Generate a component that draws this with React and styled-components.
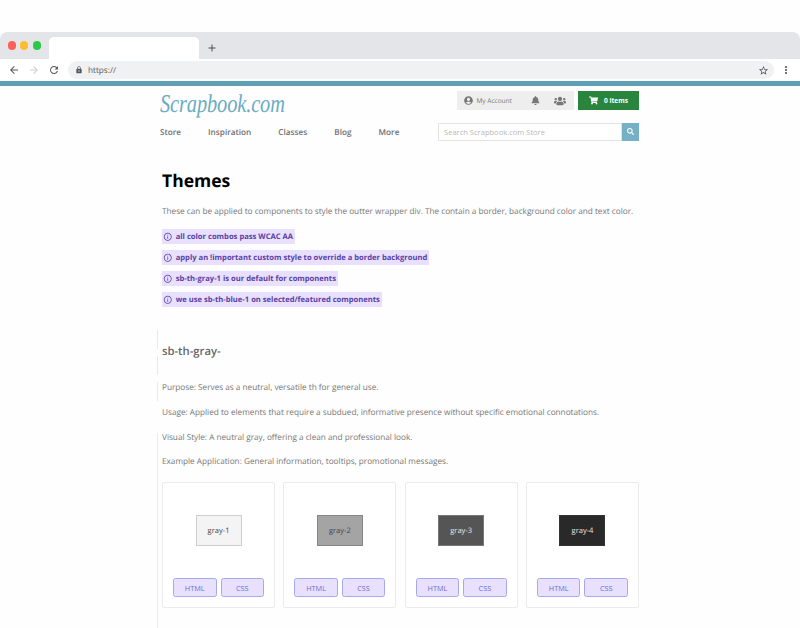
import React from 'react';
import styled, { createGlobalStyle } from 'styled-components';
import { FaBell, FaUsers, FaShoppingCart, FaSearch, FaUserCircle } from 'react-icons/fa';
import { MdArrowBack, MdArrowForward, MdRefresh, MdStarBorder, MdMoreVert, MdLock, MdAdd, MdInfoOutline } from 'react-icons/md';

const Global = createGlobalStyle`
  * { box-sizing: border-box; }
  body { margin: 0; background: #fefefe; font-family: "Open Sans", sans-serif; text-rendering: geometricPrecision; }
  h1, h2, p, ul { margin: 0; padding: 0; }
  button, input { font-family: inherit; margin: 0; }
  svg { display: block; flex: none; }
`;

const Page = styled.div`
  height: 628px;
  padding-top: 32px;
  overflow: hidden;
`;
const TabBar = styled.div`
  display: flex;
  height: 27px;
  padding: 5px 0 0 7px;
  background: #e4e5e9;
  border-radius: 7px 7px 0 0;
`;
const Lights = styled.div`
  display: flex;
  gap: 4.2px;
  width: 42px;
  padding: 4.4px 0 0 0.9px;
`;
const Light = styled.span`
  width: 8.2px;
  height: 8.2px;
  border-radius: 50%;
  background: ${(p) => p.$color};
`;
const Tab = styled.div`
  width: 150px;
  height: 22px;
  background: #fff;
  border-radius: 5px 5px 0 0;
`;
const NewTab = styled.div`
  padding: 5px 0 0 7px;
  color: #4b4d50;
`;
const Toolbar = styled.div`
  display: flex;
  align-items: center;
  height: 22px;
  padding: 0 8px;
  background: #fff;
  color: #55585c;
`;
const NavIcons = styled.div`
  display: flex;
  gap: 8px;
  width: 60px;
`;
const Faded = styled.span`
  color: #cfd0d2;
`;
const Address = styled.div`
  display: flex;
  align-items: center;
  width: 706px;
  height: 18px;
  padding: 0 5px 0 7px;
  border-radius: 9px;
  background: #f0f1f3;
  font-size: 8.2px;
`;
const Url = styled.span`
  flex: 1;
  padding-left: 5px;
`;
const MenuDots = styled.div`
  margin-left: 6px;
`;
const AccentBar = styled.div`
  height: 5px;
  background: #5f9fb4;
`;

const Site = styled.main`
  width: 479px;
  margin-left: 160px;
`;
const Header = styled.header`
  display: flex;
  justify-content: space-between;
  height: 59px;
`;
const Logo = styled.div`
  width: 157px;
  height: 40px;
  padding-top: 2px;
  color: #6aabc0;
  font: italic 25.5px/31px "Liberation Serif", serif;
  letter-spacing: -0.15px;
  transform: scaleX(0.8);
  transform-origin: left;
`;
const Nav = styled.nav`
  display: flex;
  gap: 27.1px;
  color: #707070;
  font-size: 8.2px;
  font-weight: 600;
  line-height: 14px;
`;
const Tools = styled.div`
  width: 201px;
  padding-top: 5px;
`;
const Actions = styled.div`
  display: flex;
  justify-content: flex-end;
  gap: 4px;
  height: 19px;
`;
const Account = styled.div`
  display: flex;
  align-items: center;
  width: 117px;
  padding-left: 7px;
  background: #eeeeee;
  color: #777;
  font-size: 6.5px;
`;
const AccountLabel = styled.span`
  width: 57.5px;
  padding-left: 3.5px;
`;
const BellSlot = styled.span`
  width: 23px;
`;
const Cart = styled.button`
  display: flex;
  align-items: center;
  gap: 6px;
  width: 61px;
  padding: 0 0 1px 11px;
  border: 0;
  background: #29853e;
  color: #fff;
  font-size: 6.6px;
  font-weight: 700;
`;
const Search = styled.div`
  display: flex;
  height: 18px;
  margin-top: 13px;
`;
const SearchInput = styled.input`
  flex: 1;
  min-width: 0;
  padding: 0 5px;
  border: 1px solid #e2e2e2;
  background: #fff;
  font-size: 7.55px;
  &::placeholder { color: #b9b9b9; }
`;
const SearchButton = styled.button`
  width: 17px;
  padding: 0 0 1px 5px;
  border: 0;
  background: #76b0c5;
  color: #fff;
`;

const Title = styled.h1`
  padding: 24px 0 0 2px;
  color: #000;
  font-size: 17.5px;
  line-height: 25px;
`;
const Text = styled.p`
  color: #777;
  font-size: 8.21px;
  line-height: 12px;
  white-space: nowrap;
`;
const Intro = styled(Text)`
  padding: 12px 0 0 2px;
`;
const Notes = styled.ul`
  display: flex;
  flex-direction: column;
  align-items: flex-start;
  gap: 6px;
  padding: 11.4px 0 0 2px;
  list-style: none;
`;
const Note = styled.li`
  display: flex;
  align-items: center;
  gap: 3.2px;
  height: 15px;
  padding: 0 2px 0 1px;
  background: #e8e0fd;
  color: #5940a5;
  font-size: 7.62px;
  font-weight: 700;
`;
const Rail = styled.span`
  display: block;
  width: 1px;
  height: ${(p) => p.$height}px;
  background: ${(p) => p.$color};
`;
const Section = styled.section`
  display: flex;
  width: 482px;
  height: 298px;
  margin: 22.6px 0 0 -3px;
`;
const Rails = styled.div`
  display: flex;
  flex-direction: column;
  gap: 7px;
  width: 5px;
`;
const Body = styled.div`
  width: 477px;
`;
const Heading = styled.h2`
  height: 52px;
  padding-top: 13px;
  color: #666;
  font-size: 11.25px;
  font-weight: 600;
  line-height: 17px;
`;
const Facts = styled.div`
  display: flex;
  flex-direction: column;
  gap: 12.8px;
`;
const Cards = styled.div`
  display: grid;
  grid-template-columns: repeat(4, 113px);
  justify-content: space-between;
  margin-top: 13.7px;
`;
const Card = styled.article`
  display: flex;
  flex-direction: column;
  align-items: center;
  justify-content: space-between;
  height: 126px;
  padding: 32px 0 10px;
  border: 1px solid #ebebeb;
  border-radius: 2px;
  background: #fff;
`;
const Swatch = styled.div`
  display: flex;
  align-items: center;
  justify-content: center;
  width: 46px;
  height: 31px;
  border: 1px solid ${(p) => p.$border};
  background: ${(p) => p.$fill};
  color: ${(p) => p.$ink};
  font-size: 7.55px;
`;
const Buttons = styled.div`
  display: flex;
  gap: 4px;
`;
const CodeButton = styled.button`
  width: 43.5px;
  height: 19px;
  padding: 0;
  border: 1px solid #a5aaf0;
  border-radius: 2.5px;
  background: #e9e0fe;
  color: #6670d4;
  font-size: 7.3px;
`;

const notes = [
  'all color combos pass WCAC AA',
  'apply an !important custom style to override a border background',
  'sb-th-gray-1 is our default for components',
  'we use sb-th-blue-1 on selected/featured components',
];
const facts = [
  'Purpose: Serves as a neutral, versatile th for general use.',
  'Usage: Applied to elements that require a subdued, informative presence without specific emotional connotations.',
  'Visual Style: A neutral gray, offering a clean and professional look.',
  'Example Application: General information, tooltips, promotional messages.',
];
const swatches = [
  { name: 'gray-1', fill: '#f4f4f4', border: '#cecece', ink: '#484848' },
  { name: 'gray-2', fill: '#a4a4a4', border: '#858585', ink: '#454545' },
  { name: 'gray-3', fill: '#555555', border: '#777777', ink: '#e5e5e5' },
  { name: 'gray-4', fill: '#292929', border: '#343434', ink: '#e5e5e5' },
];

export default function App() {
  return (
    <Page>
      <Global />
      <TabBar>
        <Lights>
          <Light $color="#fc605b" />
          <Light $color="#fdbc31" />
          <Light $color="#2bca43" />
        </Lights>
        <Tab />
        <NewTab><MdAdd size={12} /></NewTab>
      </TabBar>
      <Toolbar>
        <NavIcons>
          <MdArrowBack size={12} />
          <Faded><MdArrowForward size={12} /></Faded>
          <MdRefresh size={12} />
        </NavIcons>
        <Address>
          <MdLock size={8} />
          <Url>https://</Url>
          <MdStarBorder size={11} />
        </Address>
        <MenuDots><MdMoreVert size={12} /></MenuDots>
      </Toolbar>
      <AccentBar />
      <Site>
        <Header>
          <div>
            <Logo>Scrapbook.com</Logo>
            <Nav>
              <span>Store</span>
              <span>Inspiration</span>
              <span>Classes</span>
              <span>Blog</span>
              <span>More</span>
            </Nav>
          </div>
          <Tools>
            <Actions>
              <Account>
                <FaUserCircle size={9} />
                <AccountLabel>My Account</AccountLabel>
                <BellSlot><FaBell size={9} /></BellSlot>
                <FaUsers size={12} />
              </Account>
              <Cart><FaShoppingCart size={9} />0 items</Cart>
            </Actions>
            <Search>
              <SearchInput placeholder="Search Scrapbook.com Store" />
              <SearchButton aria-label="Search"><FaSearch size={7} /></SearchButton>
            </Search>
          </Tools>
        </Header>
        <Title>Themes</Title>
        <Intro>These can be applied to components to style the outter wrapper div. The contain a border, background color and text color.</Intro>
        <Notes>
          {notes.map((note) => (
            <Note key={note}><MdInfoOutline size={9.5} />{note}</Note>
          ))}
        </Notes>
        <Section>
          <Rails>
            <Rail $height={19} $color="#e9e6fb" />
            <Rail $height={19} $color="#e9e6fb" />
            <Rail $height={19} $color="#e9e6fb" />
            <Rail $height={18} $color="transparent" />
            <Rail $height={196} $color="#ebebf0" />
          </Rails>
          <Body>
            <Heading>sb-th-gray-</Heading>
            <Facts>
              {facts.map((fact) => <Text key={fact}>{fact}</Text>)}
            </Facts>
            <Cards>
              {swatches.map((s) => (
                <Card key={s.name}>
                  <Swatch $fill={s.fill} $border={s.border} $ink={s.ink}>{s.name}</Swatch>
                  <Buttons>
                    <CodeButton>HTML</CodeButton>
                    <CodeButton>CSS</CodeButton>
                  </Buttons>
                </Card>
              ))}
            </Cards>
          </Body>
        </Section>
      </Site>
    </Page>
  );
}
